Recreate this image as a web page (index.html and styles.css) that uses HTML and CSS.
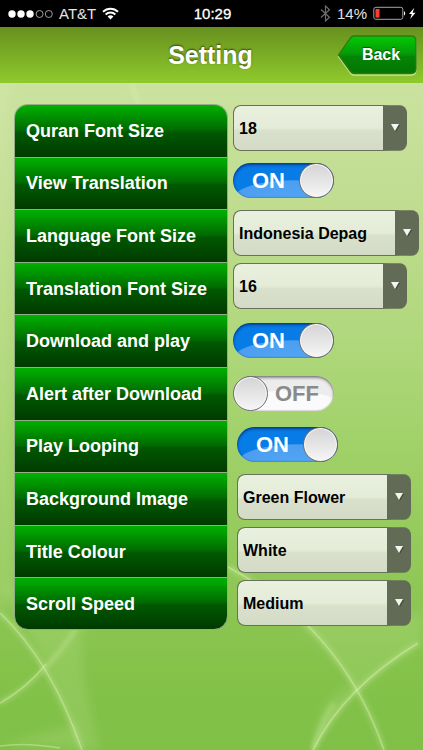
FILE: index.html
```html
<!DOCTYPE html>
<html lang="en">
<head>
<meta charset="utf-8">
<meta name="viewport" content="width=device-width, initial-scale=1">
<title>Setting</title>
<link rel="stylesheet" href="styles.css">
</head>
<body>
<div class="status">
  <div class="status-left">
    <svg class="dots" width="45" height="10" viewBox="0 0 45 10" aria-hidden="true">
      <g fill="#fff"><circle cx="4" cy="5" r="3.7"/><circle cx="13" cy="5" r="3.7"/><circle cx="22" cy="5" r="3.7"/></g>
      <g fill="none" stroke="#c4c4c4" stroke-width=".8"><circle cx="31.600" cy="5" r="3.500"/><circle cx="40.800" cy="5" r="3.500"/></g>
    </svg>
    <span class="carrier">AT&amp;T</span>
    <svg class="wifi" width="17" height="13" viewBox="0 0 17 13" aria-hidden="true">
      <g fill="none" stroke="#fff" stroke-width="1.900"><path d="M1 4.800C5.200.700 11.800.700 16 4.800"/><path d="M3.600 7.500C6.400 4.800 10.600 4.800 13.400 7.500"/></g>
      <path d="M5.600 9.400C7.300 7.900 9.700 7.900 11.400 9.400L8.500 12.500Z" fill="#fff"/>
    </svg>
  </div>
  <time class="clock">10:29</time>
  <div class="status-right">
    <svg width="11" height="17" viewBox="0 0 11 17" aria-hidden="true"><path d="M1 4.500 9.500 12.300 5.500 16V1L9.500 4.700 1 12.500" fill="none" stroke="#6e6e6e" stroke-width="1.200"/></svg>
    <span class="percent">14%</span>
    <svg width="44" height="15" viewBox="0 0 44 15" aria-hidden="true">
      <rect x=".8" y="1.300" width="29" height="12" rx="2" fill="none" stroke="#a5a5a5"/>
      <rect x="2.500" y="3" width="4" height="8.600" fill="#ff3b30"/>
      <path d="M31 5.200c1.600.3 1.600 4 0 4.300z" fill="#fff"/>
      <path d="M41.300 1.800 36 8h2.800L37.200 13 42.500 6.700H39.600Z" fill="#fff"/>
    </svg>
  </div>
</div>

<header class="bar">
  <h1 class="title">Setting</h1>
  <button class="back" type="button">
    <svg class="back-shape" width="81" height="42" viewBox="0 0 81 42" aria-hidden="true">
      <defs><linearGradient id="backFill" x1="0" y1="0" x2="0" y2="1">
        <stop offset="0" stop-color="#04c904"/><stop offset=".48" stop-color="#049a08"/><stop offset=".55" stop-color="#058405"/><stop offset="1" stop-color="#047504"/>
      </linearGradient></defs>
      <path d="M17 2.500H74Q79 2.500 79 7.500V35Q79 40 74 40H17Q15 40 13.500 38L1.500 21.500 13.500 4.500Q15 2.500 17 2.500Z" fill="none" stroke="#cbe89a" stroke-width="1.300"/>
      <path d="M17 1H74Q79 1 79 6V33.500Q79 38.500 74 38.500H17Q15 38.500 13.500 36.500L1.500 20 13.500 3Q15 1 17 1Z" fill="url(#backFill)" stroke="#2c7a10" stroke-width="1.300"/>
    </svg>
    <span class="back-text">Back</span>
  </button>
</header>

<main class="page">
  <svg class="waves" viewBox="0 0 423 667" preserveAspectRatio="none" aria-hidden="true">
    <defs>
      <filter id="soft" x="-20%" y="-20%" width="140%" height="140%"><feGaussianBlur stdDeviation="5"/></filter>
      <filter id="haze"><feGaussianBlur stdDeviation="2"/></filter>
    </defs>
    <g fill="#e6f8c8" fill-opacity=".13" filter="url(#soft)">
      <path d="M0 500Q45 575 82 667H100Q70 560 90 530Z"/>
      <path d="M300 540Q350 590 357 610Q390 580 423 560V530Z"/>
      <path d="M313 667Q320 610 357 600Z"/>
      <path d="M0 660Q50 650 78 640L82 667Z"/>
      <path d="M-5 0H10Q6 300 14 500L-5 540Z"/>
    </g>
    <g fill="none" stroke="#dff5b8" stroke-opacity=".28" stroke-width="5" filter="url(#haze)"><path d="M0 530Q51 578 82 667"/><path d="M0 620Q45 595 76 545"/><path d="M228 484Q342 545 384 667"/><path d="M313 667Q343 606 418 560"/><path d="M313 667Q320 640 334 620"/><path d="M132 0Q134 13 140 22"/></g>
    <g fill="none" stroke="#dff5b8" stroke-opacity=".42" stroke-width="1.500"><path d="M0 530Q51 578 82 667"/><path d="M0 620Q28 604 46 581"/><path d="M228 484Q342 545 384 667"/><path d="M313 667Q343 606 418 560"/><path d="M0 663Q25 659 60 665"/></g>
  </svg>

  <form class="settings">
    <div class="row high">
      <label class="name" for="quran-size">Quran Font Size</label>
      <div class="control"><span class="picker"><select id="quran-size"><option>18</option></select><i class="arrow"></i></span></div>
    </div>
    <div class="row high">
      <label class="name" for="view-translation">View Translation</label>
      <div class="control"><span class="switch"><input id="view-translation" type="checkbox" checked><span class="on">ON</span><span class="off">OFF</span><i class="knob"></i></span></div>
    </div>
    <div class="row high">
      <label class="name" for="language">Language Font Size</label>
      <div class="control"><span class="picker wide"><select id="language"><option>Indonesia Depag</option></select><i class="arrow"></i></span></div>
    </div>
    <div class="row high">
      <label class="name" for="translation-size">Translation Font Size</label>
      <div class="control"><span class="picker"><select id="translation-size"><option>16</option></select><i class="arrow"></i></span></div>
    </div>
    <div class="row">
      <label class="name" for="download-play">Download and play</label>
      <div class="control"><span class="switch"><input id="download-play" type="checkbox" checked><span class="on">ON</span><span class="off">OFF</span><i class="knob"></i></span></div>
    </div>
    <div class="row">
      <label class="name" for="alert">Alert after Download</label>
      <div class="control"><span class="switch"><input id="alert" type="checkbox"><span class="on">ON</span><span class="off">OFF</span><i class="knob"></i></span></div>
    </div>
    <div class="row inset">
      <label class="name" for="looping">Play Looping</label>
      <div class="control"><span class="switch"><input id="looping" type="checkbox" checked><span class="on">ON</span><span class="off">OFF</span><i class="knob"></i></span></div>
    </div>
    <div class="row inset">
      <label class="name" for="background">Background Image</label>
      <div class="control"><span class="picker"><select id="background"><option>Green Flower</option></select><i class="arrow"></i></span></div>
    </div>
    <div class="row inset">
      <label class="name" for="title-colour">Title Colour</label>
      <div class="control"><span class="picker"><select id="title-colour"><option>White</option></select><i class="arrow"></i></span></div>
    </div>
    <div class="row inset">
      <label class="name" for="scroll-speed">Scroll Speed</label>
      <div class="control"><span class="picker"><select id="scroll-speed"><option>Medium</option></select><i class="arrow"></i></span></div>
    </div>
  </form>
</main>
</body>
</html>
```
FILE: styles.css
```css
* {
  box-sizing: border-box;
}

body {
  margin: 0;
  min-height: 100vh;
  display: flex;
  flex-direction: column;
  font-family: "Liberation Sans", Arial, sans-serif;
  background: #85c24b;
}

/* Status bar */
.status {
  display: grid;
  grid-template-columns: 1fr auto 1fr;
  align-items: center;
  height: 27px;
  padding: 0 6px 0 8px;
  background: #000;
  color: #fff;
  font-size: 15px;
  line-height: 27px;
}

.status-left,
.status-right {
  display: flex;
  align-items: center;
}

.status-left {
  gap: 6px;
}

.status-right {
  justify-content: flex-end;
  gap: 6px;
}

.carrier,
.percent {
  color: #e4e4e4;
}

.clock {
  -webkit-text-stroke: 0.3px #fff;
}

/* Title bar */
.bar {
  display: grid;
  grid-template-columns: 1fr auto 1fr;
  align-items: center;
  height: 56px;
  padding: 0 6px 0 4px;
  background: linear-gradient(#67901f, #8fca2c);
}

.title {
  grid-column: 2;
  margin: 0;
  color: #fff;
  font-size: 25px;
  line-height: 30px;
  text-shadow: 0 -1px 2px rgba(0, 0, 0, 0.6);
}

.back {
  position: relative;
  justify-self: end;
  width: 80px;
  height: 40px;
  padding: 0 0 0 8px;
  border: 0;
  background: none;
  color: #fff;
  font: bold 16px/38px "Liberation Sans", Arial, sans-serif;
  text-shadow: 0 -1px 1px rgba(0, 50, 0, 0.7);
}

.back-shape {
  position: absolute;
  top: 0;
  left: 0;
}

.back-text {
  position: relative;
}

/* Settings */
.page {
  position: relative;
  flex: 1;
  display: flex;
  padding: 21px 0 120px 14px;
  background: linear-gradient(#cbe2a0 0%, #bddb8c 22%, #b0d87c 38%, #9fd067 56%, #8dc654 78%, #84c24a 88%, #80c047 100%);
}

.waves {
  position: absolute;
  top: 0;
  left: 0;
  width: 100%;
  height: 100%;
}

.settings {
  position: relative;
  flex: 1;
  display: flex;
  flex-direction: column;
}

.row {
  flex: 1;
  display: grid;
  grid-template-columns: 214px 1fr;
}

.name {
  display: flex;
  align-items: center;
  padding-left: 11px;
  border: 1px solid #92ad88;
  border-bottom: 0;
  background: linear-gradient(#00b000 0%, #00a000 12%, #006a00 48%, #005900 52%, #003a00 100%);
  color: #fff;
  font-size: 18px;
  font-weight: bold;
  line-height: 22px;
}

.row:first-child .name {
  border-radius: 14px 14px 0 0;
}

.row:last-child .name {
  border-bottom: 1px solid #92ad88;
  border-radius: 0 0 14px 14px;
}

.control {
  display: flex;
  align-items: center;
  padding-left: 5px;
}

.high .control {
  padding-bottom: 4px;
}

.inset .control {
  padding-bottom: 2px;
  padding-left: 9px;
}

/* Drop-down */
.picker {
  position: relative;
  width: 174px;
  height: 46px;
}

.wide {
  width: 186px;
}

.picker select {
  appearance: none;
  width: 100%;
  height: 100%;
  padding: 2px 8px 0 5px;
  border: 1px solid #68725a;
  border-right: 24px solid #626b55;
  border-radius: 8px;
  background: linear-gradient(#e9f0df 0%, #e4ecd8 50%, #d9e1cc 56%, #d3dbc7 100%) padding-box;
  color: #000;
  font: bold 16px/20px "Liberation Sans", Arial, sans-serif;
}

.arrow {
  position: absolute;
  top: 19px;
  right: 8px;
  border: 4px solid transparent;
  border-top: 7px solid #f4f4f0;
  border-bottom: 0;
  filter: drop-shadow(1px 1px 0 rgba(40, 40, 30, 0.5));
  pointer-events: none;
}

/* Switch */
.switch {
  position: relative;
  width: 101px;
  height: 35px;
  font-size: 22px;
  font-weight: bold;
  line-height: 36px;
}

.switch input {
  appearance: none;
  position: absolute;
  inset: 0;
  margin: 0;
  border-radius: 18px;
  background:
    radial-gradient(ellipse 60px 22px at 55px 36px, #fbfbfb 0%, #fafafa 96%, transparent 100%),
    #ececec;
  box-shadow: inset 0 2px 3px rgba(0, 0, 0, 0.4), inset 0 0 2px rgba(0, 0, 0, 0.4);
}

.switch input:checked {
  background:
    radial-gradient(ellipse 60px 18px at 60px 35px, #52a5f4 0%, #4c9ff0 96%, transparent 100%),
    #077be6;
  box-shadow: inset 0 2px 3px rgba(0, 30, 90, 0.6), inset 0 0 2px rgba(0, 30, 90, 0.5);
}

.on,
.off {
  position: absolute;
  top: 0;
  pointer-events: none;
}

.on {
  display: none;
  left: 19px;
  color: #fff;
}

.off {
  right: 15px;
  color: #8a8a8a;
}

.switch input:checked ~ .on {
  display: block;
}

.switch input:checked ~ .off {
  display: none;
}

.knob {
  position: absolute;
  top: 0;
  left: 0;
  width: 35px;
  height: 35px;
  border: 1px solid #6d6d72;
  border-radius: 50%;
  background: linear-gradient(#d4d4d6, #f6f6f6);
  box-shadow: inset 0 0 0 1px #fafafa;
  pointer-events: none;
}

.switch input:checked ~ .knob {
  left: auto;
  right: 0;
}
```
